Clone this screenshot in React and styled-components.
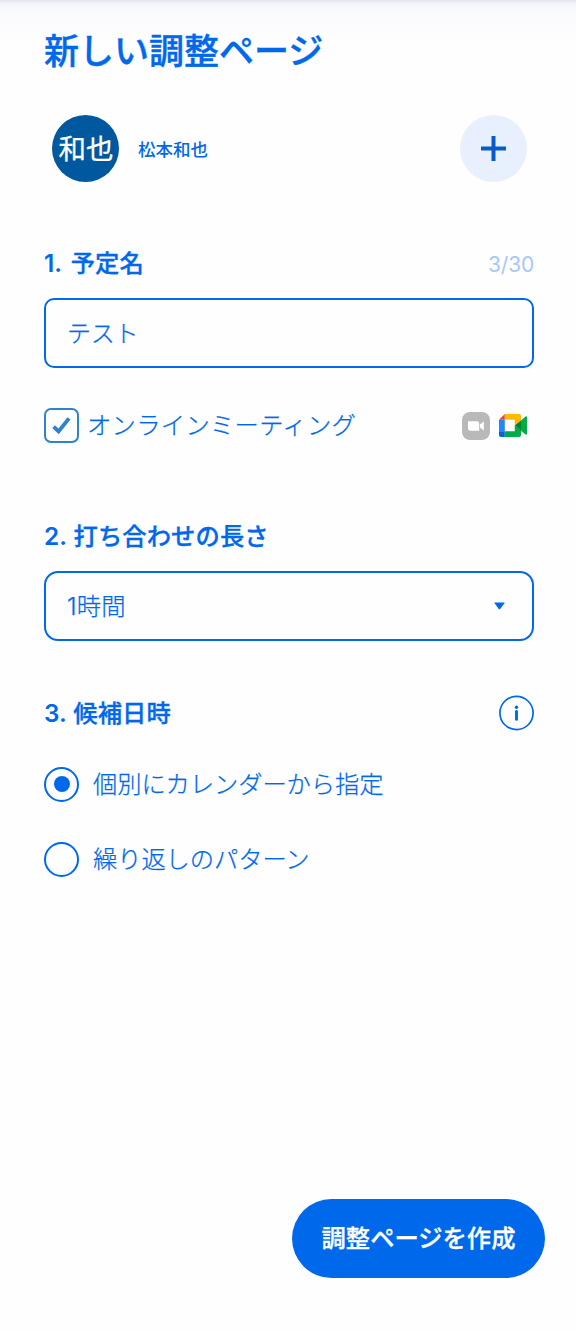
import React, { useState } from 'react';
import styled, { createGlobalStyle, ThemeProvider } from 'styled-components';

const theme = {
  primary: '#0068eb',
  primaryLight: '#e8effd',
  primaryDark: '#0a5bc8',
  muted: '#a9c6fa',
  checkbox: '#3182ce',
  avatar: '#00589f',
};

const GlobalStyle = createGlobalStyle`
  * {
    box-sizing: border-box;
  }

  body {
    margin: 0;
    background: #fefefe;
    font-family: Inter, "Noto Sans CJK JP", sans-serif;
  }

  button, input {
    margin: 0;
    font-family: inherit;
  }
`;

const Page = styled.main`
  display: flex;
  flex-direction: column;
  height: 1331px;
  padding: 26px 42px 53px 44px;
  color: ${props => props.theme.primary};
  background: linear-gradient(#e4e6f0 0, #f3f4f8 4px, #f9fafc 10px, #fefefe 42px);
`;

const Title = styled.h1`
  height: 50px;
  margin: 0;
  font-size: 35px;
  font-weight: 500;
  line-height: 50px;
  -webkit-text-stroke: 0.4px currentColor;
`;

const Profile = styled.div`
  display: flex;
  align-items: center;
  height: 67px;
  margin: 39px 7px 0 8px;
`;

const Avatar = styled.div`
  display: flex;
  align-items: center;
  justify-content: center;
  width: 67px;
  height: 67px;
  padding-left: 1px;
  border-radius: 50%;
  background: ${props => props.theme.avatar};
  color: #fff;
  font-size: 27.5px;
  line-height: 40px;
  -webkit-text-stroke: 0.3px currentColor;
`;

const ProfileName = styled.span`
  margin-left: 19px;
  padding-top: 2px;
  font-size: 17.5px;
  font-weight: 500;
  line-height: 26px;
`;

const AddButton = styled.button`
  display: flex;
  align-items: center;
  justify-content: center;
  width: 67px;
  height: 67px;
  margin-left: auto;
  padding: 0;
  border: 0;
  border-radius: 50%;
  background: ${props => props.theme.primaryLight};
  color: ${props => props.theme.primaryDark};
`;

const SectionHeader = styled.div`
  display: flex;
  align-items: center;
  justify-content: space-between;
  height: 36px;
  margin-top: ${props => props.$top}px;
`;

const Heading = styled.h2`
  margin: 0;
  font-size: 24.3px;
  font-weight: 600;
  line-height: 36px;
`;

const HeadingText = styled.span`
  margin-left: ${props => props.$gap || 1}px;
  font-weight: 500;
  letter-spacing: 0.1px;
  -webkit-text-stroke: 0.3px currentColor;
`;

const Counter = styled.span`
  padding-top: 3px;
  color: ${props => props.theme.muted};
  font-size: 21px;
  letter-spacing: -0.2px;
  line-height: 32px;
`;

const TextInput = styled.input`
  flex: none;
  width: 100%;
  height: 70px;
  margin-top: 17px;
  padding: 0 21px 4px;
  border: 2px solid ${props => props.theme.primary};
  border-radius: 10px;
  outline: 0;
  background: transparent;
  color: inherit;
  font-size: 24px;
  font-weight: 300;
  letter-spacing: -0.3px;
  -webkit-text-stroke: 0.25px currentColor;
`;

const SelectButton = styled.button`
  display: flex;
  flex: none;
  align-items: center;
  justify-content: space-between;
  width: 100%;
  height: 70px;
  margin-top: 17px;
  padding: 0 27px 0 21px;
  border: 2px solid ${props => props.theme.primary};
  border-radius: 14px;
  background: transparent;
  color: inherit;
  font-size: 24.3px;
  font-weight: 300;
`;

const SelectValue = styled.span`
  padding-bottom: 4px;
  letter-spacing: 0.2px;
  -webkit-text-stroke: 0.25px currentColor;
`;

const OptionRow = styled.label`
  display: flex;
  align-items: center;
  height: 35px;
  margin-top: ${props => props.$top}px;
  font-size: 24.3px;
  font-weight: 300;
  letter-spacing: ${props => props.$spacing || 0}px;
  line-height: 35px;
  -webkit-text-stroke: 0.25px currentColor;
`;

const HiddenInput = styled.input`
  position: absolute;
  opacity: 0;
  pointer-events: none;
`;

const CheckMark = styled.span`
  display: flex;
  align-items: center;
  justify-content: center;
  width: 35px;
  height: 35px;
  margin-right: 8px;
  border: 2px solid ${props => props.theme.checkbox};
  border-radius: 7px;
  color: ${props => props.theme.checkbox};
`;

const RadioMark = styled.span`
  display: flex;
  align-items: center;
  justify-content: center;
  width: 35px;
  height: 35px;
  padding: 0 0 1px 1px;
  margin-right: 14px;
  border: 2px solid ${props => props.theme.primary};
  border-radius: 50%;

  &::after {
    content: '';
    width: 16px;
    height: 16px;
    border-radius: 50%;
    background: ${props => (props.$checked ? props.theme.primary : 'transparent')};
  }
`;

const MeetingTools = styled.span`
  display: flex;
  align-items: center;
  gap: 9px;
  margin-left: auto;
  margin-right: 7px;
`;

const CreateButton = styled.button`
  width: 253px;
  height: 79px;
  margin-top: auto;
  margin-right: -11px;
  align-self: flex-end;
  padding: 0 0 5px;
  border: 0;
  border-radius: 40px;
  background: ${props => props.theme.primary};
  color: #fff;
  font-size: 24.3px;
  font-weight: 500;
  -webkit-text-stroke: 0.3px currentColor;
`;

const PlusIcon = () => (
  <svg width="25" height="25" viewBox="0 0 25 25">
    <path d="M12.5 0v25M0 12.5h25" stroke="currentColor" strokeWidth="4" />
  </svg>
);

const CheckIcon = () => (
  <svg width="19" height="17" viewBox="0 0 19 17">
    <path d="M1.6 9.6l5 4.8L17 1.4" fill="none" stroke="currentColor" strokeWidth="3.9" />
  </svg>
);

const CaretIcon = () => (
  <svg width="11" height="8" viewBox="0 0 11 8">
    <path d="M.9 .5h9.2q.8 0 .3.7L6.2 7q-.7.8-1.4 0L.6 1.2Q.1.5.9.5z" fill="currentColor" />
  </svg>
);

const InfoIcon = () => (
  <svg width="35" height="36" viewBox="0 0 35 36">
    <circle cx="17.5" cy="18" r="16.6" fill="none" stroke="currentColor" strokeWidth="1.7" />
    <circle cx="17.5" cy="12.2" r="1.7" fill="currentColor" />
    <path d="M17.5 16.4v8" stroke="currentColor" strokeWidth="2.9" strokeLinecap="round" />
  </svg>
);

const ZoomIcon = () => (
  <svg width="28" height="28" viewBox="0 0 28 28">
    <rect width="28" height="28" rx="8" fill="#b9b9b9" />
    <path d="M6 9.3h8.6q2.6 0 2.6 2.6v6.8H8.6Q6 18.7 6 16.1z" fill="#fff" />
    <path d="M18 12.5l3.8-3v9l-3.8-3z" fill="#fff" />
  </svg>
);

const MeetIcon = () => (
  <svg width="28" height="23" viewBox="0 0 28 23">
    <path d="M0 5.8h5.8v11.5H0z" fill="#2684fc" />
    <path d="M0 5.8L5.8 0v5.8z" fill="#ea4335" />
    <path d="M0 17.3h5.8V23H2q-2 0-2-2z" fill="#0066da" />
    <path d="M5.8 0H20q2 0 2 2v4.8l-6.2 5V5.8h-10z" fill="#ffba00" />
    <path d="M5.8 17.3h10v-5.8l6.2 5V21q0 2-2 2H5.8z" fill="#00ac47" />
    <path d="M22 6.4l4.2-3.7Q28 1.5 28 3.3v16.4q0 1.8-1.8.6L22 16.7z" fill="#00ac47" />
    <path d="M15.8 11.5L22 6.4v10.3z" fill="#00832d" />
  </svg>
);

const patterns = [
  { id: 'calendar', label: '個別にカレンダーから指定', top: 36 },
  { id: 'repeat', label: '繰り返しのパターン', top: 40 },
];

const App = () => {
  const [name, setName] = useState('テスト');
  const [online, setOnline] = useState(true);
  const [pattern, setPattern] = useState('calendar');

  return (
    <ThemeProvider theme={theme}>
      <GlobalStyle />
      <Page>
        <Title>新しい調整ページ</Title>
        <Profile>
          <Avatar>和也</Avatar>
          <ProfileName>松本和也</ProfileName>
          <AddButton>
            <PlusIcon />
          </AddButton>
        </Profile>

        <SectionHeader $top={63}>
          <Heading>1. <HeadingText $gap={3}>予定名</HeadingText></Heading>
          <Counter>{name.length}/30</Counter>
        </SectionHeader>
        <TextInput value={name} maxLength={30} onChange={e => setName(e.target.value)} />
        <OptionRow $top={40} $spacing={0.3}>
          <HiddenInput type="checkbox" checked={online} onChange={() => setOnline(!online)} />
          <CheckMark>{online && <CheckIcon />}</CheckMark>
          オンラインミーティング
          <MeetingTools>
            <ZoomIcon />
            <MeetIcon />
          </MeetingTools>
        </OptionRow>

        <SectionHeader $top={75}>
          <Heading>2. <HeadingText>打ち合わせの長さ</HeadingText></Heading>
        </SectionHeader>
        <SelectButton>
          <SelectValue>1時間</SelectValue>
          <CaretIcon />
        </SelectButton>

        <SectionHeader $top={54}>
          <Heading>3. <HeadingText>候補日時</HeadingText></Heading>
          <InfoIcon />
        </SectionHeader>
        {patterns.map(({ id, label, top }) => (
          <OptionRow key={id} $top={top} $spacing={-0.1}>
            <HiddenInput
              type="radio"
              name="pattern"
              checked={pattern === id}
              onChange={() => setPattern(id)}
            />
            <RadioMark $checked={pattern === id} />
            {label}
          </OptionRow>
        ))}

        <CreateButton>調整ページを作成</CreateButton>
      </Page>
    </ThemeProvider>
  );
};

export default App;
